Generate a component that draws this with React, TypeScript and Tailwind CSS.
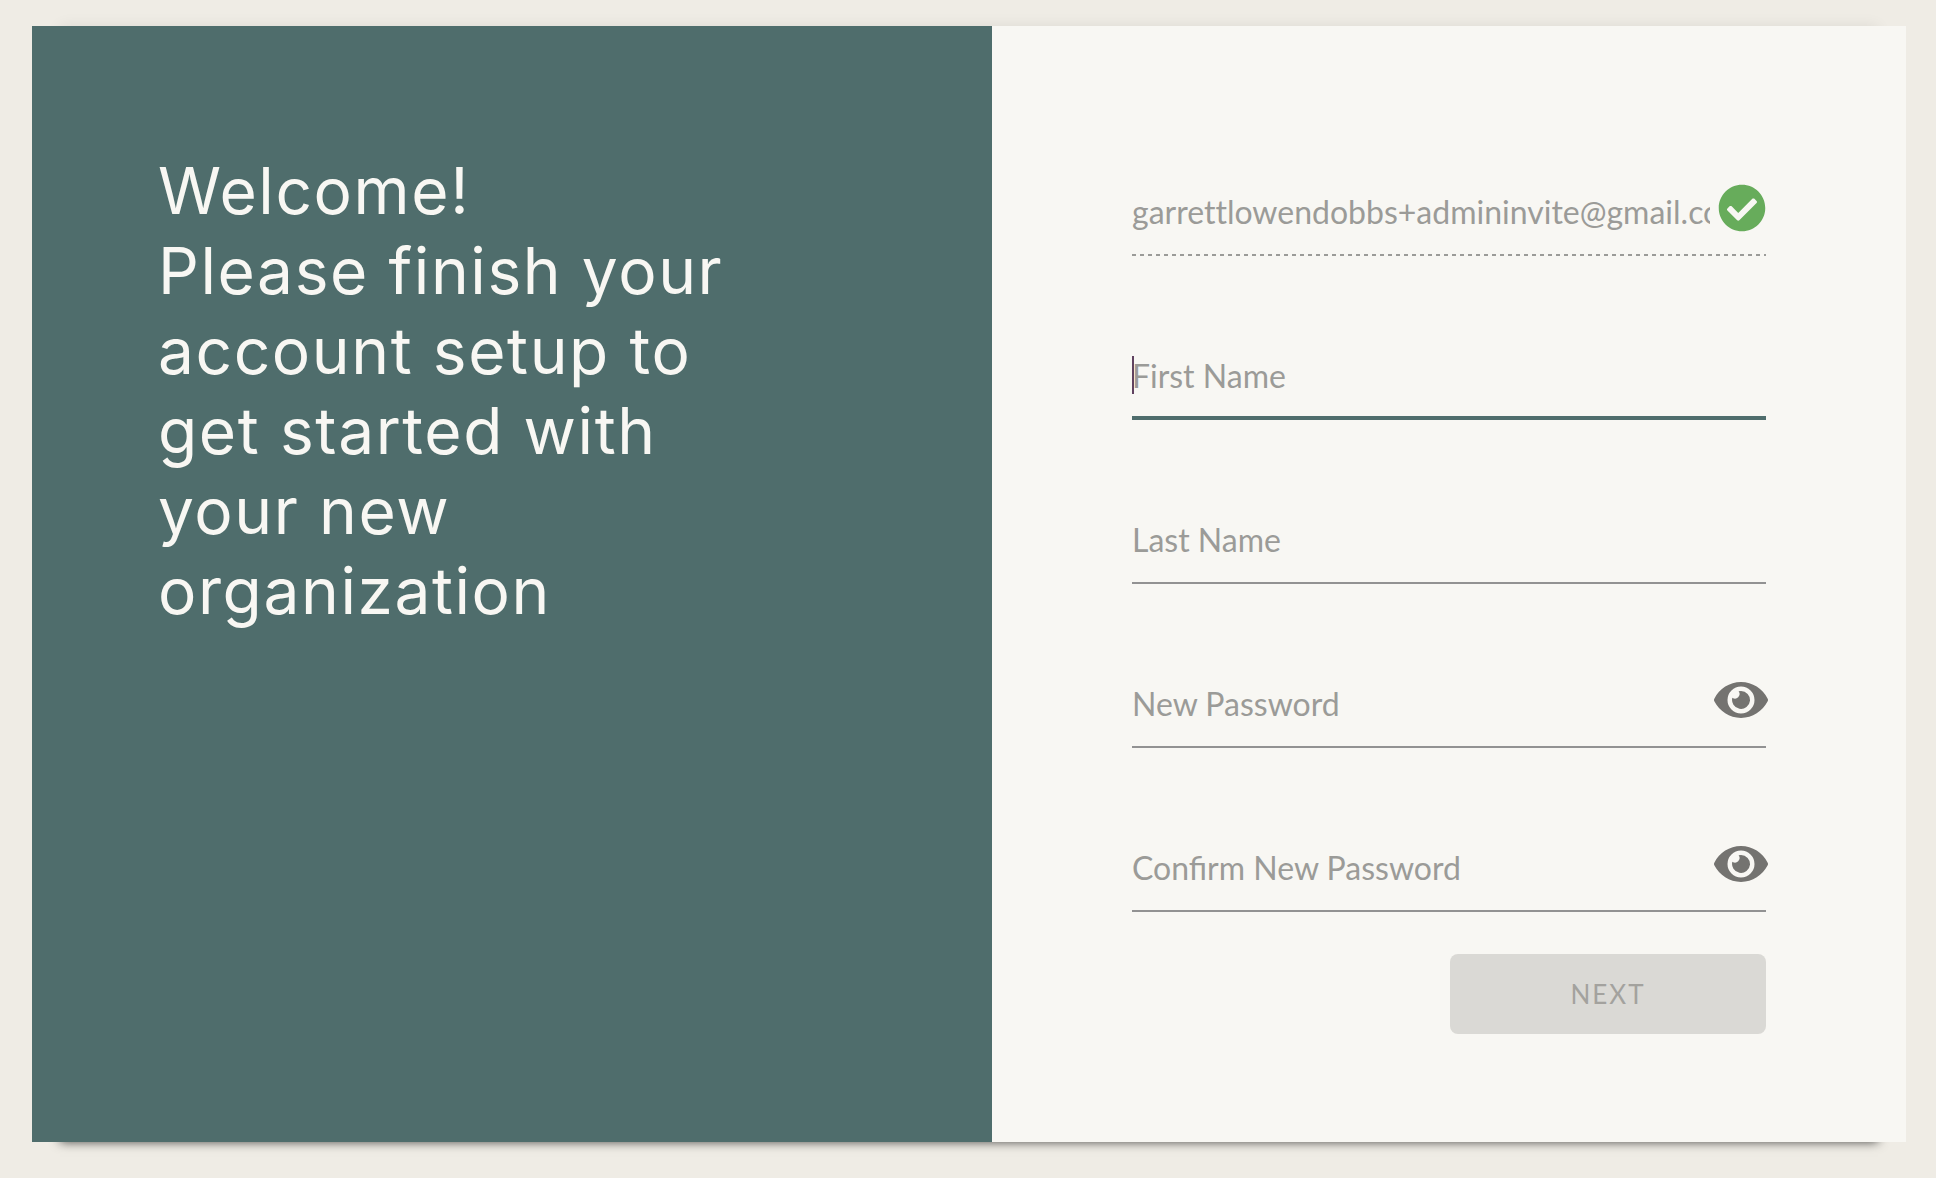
import { useState } from "react";
import type { ReactNode } from "react";
import { FaCheckCircle, FaEye } from "react-icons/fa";

interface FieldProps {
  id: string;
  label: string;
  type?: string;
  value: string;
  active?: boolean;
  onChange: (value: string) => void;
  children?: ReactNode;
}

function Field({
  id,
  label,
  type = "text",
  value,
  active = false,
  onChange,
  children,
}: FieldProps) {
  return (
    <div
      className={
        active
          ? "group relative mb-0.5 h-[72px] border-b-4 border-[#4f6d6c]"
          : "group relative mb-0.5 h-[72px] border-b-2 border-[#929292]"
      }
    >
      <div className="flex h-12 items-center gap-2">
        <input
          id={id}
          type={type}
          value={value}
          onChange={(e) => onChange(e.target.value)}
          className="h-12 min-w-0 flex-1 bg-transparent pt-2 pb-0.5 text-[32px] leading-[38px] text-[#4a4a4a] caret-[#60425f] outline-none"
        />
        {children}
      </div>
      {/* The label lies over the empty input and shrinks above it once filled */}
      <label
        htmlFor={id}
        className={
          value
            ? "pointer-events-none absolute -top-5 left-0 text-xl text-[#9b9b98]"
            : "pointer-events-none absolute top-2 left-0 text-[32px] leading-[40px] text-[#9b9b98]"
        }
      >
        {label}
      </label>
      {/* Resting caret, replaced by the native one on focus */}
      {active && (
        <span className="absolute top-2 left-0 h-[38px] w-0.5 bg-[#60425f] group-focus-within:hidden" />
      )}
    </div>
  );
}

function PasswordField({ id, label }: { id: string; label: string }) {
  const [value, setValue] = useState("");
  const [visible, setVisible] = useState(false);

  return (
    <Field
      id={id}
      label={label}
      type={visible ? "text" : "password"}
      value={value}
      onChange={setValue}
    >
      <button
        type="button"
        aria-label={visible ? "Hide password" : "Show password"}
        onClick={() => setVisible(!visible)}
        className="-mr-0.5 shrink-0 cursor-pointer text-[#747370]"
      >
        <FaEye className="h-12 w-[54px]" />
      </button>
    </Field>
  );
}

export default function App() {
  const [firstName, setFirstName] = useState("");
  const [lastName, setLastName] = useState("");

  return (
    <div className="flex min-h-screen flex-col bg-[#efece5] pt-[26px] pr-[30px] pb-9 pl-8 font-['Lato',sans-serif]">
      <main className="grid flex-1 grid-cols-[960fr_914fr] bg-[#f8f7f3] shadow-[0_28px_10px_-28px_rgba(0,0,0,0.7),0_-28px_14px_-28px_rgba(0,0,0,0.08)]">
        <section className="bg-[#4f6d6c] px-[126px] pt-[125px]">
          <h1 className="max-w-[620px] font-['Inter',sans-serif] text-[64px] leading-[80px] font-normal tracking-wide text-[#f8f7f3]">
            Welcome!
            <br />
            Please finish your account setup to get started with your new
            organization
          </h1>
        </section>

        <form
          className="flex flex-col px-[140px] pt-[158px] pb-[108px]"
          onSubmit={(e) => e.preventDefault()}
        >
          <div className="flex flex-col gap-[90px]">
            {/* Invited address, read only */}
            <div className="mb-0.5 h-[72px]">
              <div className="flex h-12 items-center gap-2">
                <input
                  type="email"
                  aria-label="Email"
                  readOnly
                  value="garrettlowendobbs+admininvite@gmail.com"
                  className="h-12 min-w-0 flex-1 bg-transparent pt-2 pb-0.5 text-[32px] leading-[38px] text-[#9b9b98] outline-none [font-variant-ligatures:none]"
                />
                <FaCheckCircle className="h-12 w-12 shrink-0 text-[#67ac5b]" />
              </div>
              <div className="mt-[22px] h-0.5 bg-[repeating-linear-gradient(to_right,#9b9b98_0_4px,transparent_4px_8px)]" />
            </div>

            <Field
              id="first-name"
              label="First Name"
              value={firstName}
              active
              onChange={setFirstName}
            />
            <Field
              id="last-name"
              label="Last Name"
              value={lastName}
              onChange={setLastName}
            />
            <PasswordField id="new-password" label="New Password" />
            <PasswordField
              id="confirm-password"
              label="Confirm New Password"
            />
          </div>

          <button
            type="submit"
            disabled
            className="mt-10 h-20 w-[316px] self-end rounded-lg bg-[#dad9d5] text-[26px] tracking-[2px] text-[#a3a29e]"
          >
            NEXT
          </button>
        </form>
      </main>
    </div>
  );
}
